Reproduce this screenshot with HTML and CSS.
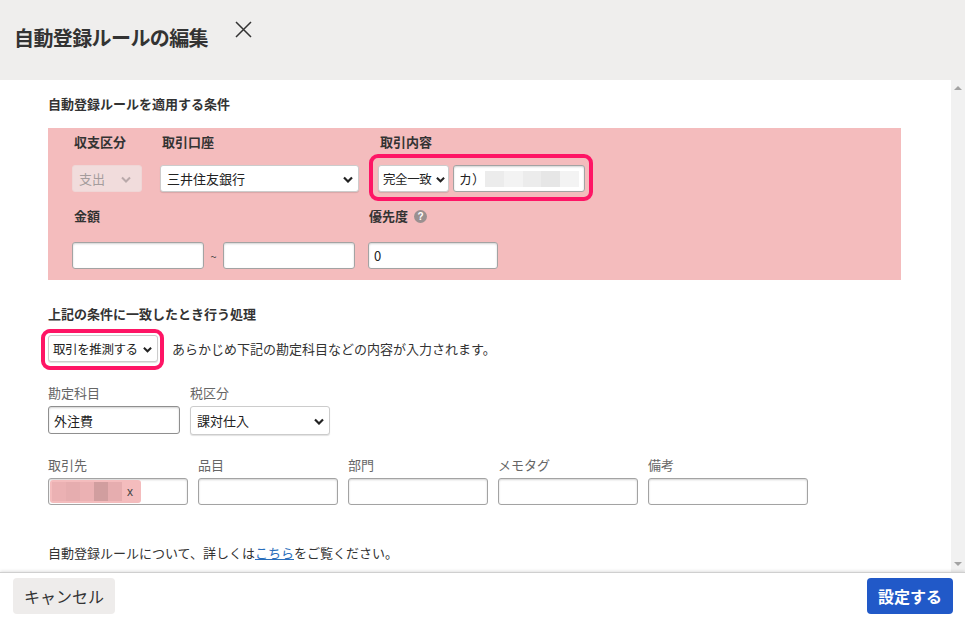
FILE: index.html
```html
<!DOCTYPE html>
<html lang="ja">
<head>
  <meta charset="UTF-8" />
  <meta name="viewport" content="width=device-width, initial-scale=1.0"/>
  <title>自動登録ルールの編集</title>
  <link rel="stylesheet" href="styles.css">
</head>
<body>
  <div class="modal">
    <header class="modal-header">
      <h1 class="modal-title">自動登録ルールの編集</h1>
      <span class="close-btn">
        <svg width="17" height="17" viewBox="0 0 17 17"><path d="M1 1L16 16M16 1L1 16" stroke="#333" stroke-width="1.5" fill="none"/></svg>
      </span>
    </header>

    <div class="modal-body">
      <div class="content">
        <h2 class="section-title">自動登録ルールを適用する条件</h2>

        <div class="condition-panel">
          <div class="panel-row">
            <div class="field field-kind">
              <div class="field-label">収支区分</div>
              <div class="select select-disabled select-kind">
                <span>支出</span>
                <svg class="chev" width="10" height="7" viewBox="0 0 10 7"><path d="M1 1.5L5 5.5L9 1.5" stroke="#b9a9aa" stroke-width="2" fill="none"/></svg>
              </div>
            </div>
            <div class="field field-account">
              <div class="field-label">取引口座</div>
              <div class="select select-account">
                <span>三井住友銀行</span>
                <svg class="chev" width="10" height="7" viewBox="0 0 10 7"><path d="M1 1.5L5 5.5L9 1.5" stroke="#222" stroke-width="2.2" fill="none"/></svg>
              </div>
            </div>
            <div class="field field-content">
              <div class="field-label">取引内容</div>
              <div class="match-group highlight">
                <div class="select select-match">
                  <span>完全一致</span>
                  <svg class="chev" width="9" height="7" viewBox="0 0 10 7"><path d="M1 1.5L5 5.5L9 1.5" stroke="#222" stroke-width="2.2" fill="none"/></svg>
                </div>
                <div class="text-input input-match">
                  <span>カ）</span>
                  <span class="blur-block b1"></span><span class="blur-block b2"></span><span class="blur-block b1"></span><span class="blur-block b3"></span><span class="blur-block b2"></span>
                </div>
              </div>
            </div>
          </div>

          <div class="panel-row row-second">
            <div class="field field-amount">
              <div class="field-label">金額</div>
              <div class="amount-range">
                <input class="text-input input-amount" type="text" value="">
                <span class="tilde">~</span>
                <input class="text-input input-amount" type="text" value="">
              </div>
            </div>
            <div class="field field-priority">
              <div class="field-label">優先度 <span class="help-icon">?</span></div>
              <input class="text-input input-priority" type="text" value="0">
            </div>
          </div>
        </div>

        <h2 class="section-title section-action">上記の条件に一致したとき行う処理</h2>
        <div class="action-row">
          <div class="highlight action-highlight">
            <div class="select select-action">
              <span>取引を推測する</span>
              <svg class="chev" width="9" height="7" viewBox="0 0 10 7"><path d="M1 1.5L5 5.5L9 1.5" stroke="#222" stroke-width="2.2" fill="none"/></svg>
            </div>
          </div>
          <span class="action-note">あらかじめ下記の勘定科目などの内容が入力されます。</span>
        </div>

        <div class="detail-row detail-row-first">
          <div class="detail-field">
            <div class="detail-label">勘定科目</div>
            <input class="text-input input-account-item" type="text" value="外注費">
          </div>
          <div class="detail-field">
            <div class="detail-label">税区分</div>
            <div class="select select-tax">
              <span>課対仕入</span>
              <svg class="chev" width="10" height="7" viewBox="0 0 10 7"><path d="M1 1.5L5 5.5L9 1.5" stroke="#222" stroke-width="2.2" fill="none"/></svg>
            </div>
          </div>
        </div>

        <div class="detail-row detail-row-second">
          <div class="detail-field">
            <div class="detail-label">取引先</div>
            <div class="text-input input-detail">
              <span class="chip">
                <span class="chip-block c1"></span><span class="chip-block c2"></span><span class="chip-block c1"></span><span class="chip-block c3"></span><span class="chip-block c2"></span>
                <span class="chip-x">x</span>
              </span>
            </div>
          </div>
          <div class="detail-field">
            <div class="detail-label">品目</div>
            <input class="text-input input-detail" type="text" value="">
          </div>
          <div class="detail-field">
            <div class="detail-label">部門</div>
            <input class="text-input input-detail" type="text" value="">
          </div>
          <div class="detail-field">
            <div class="detail-label">メモタグ</div>
            <input class="text-input input-detail" type="text" value="">
          </div>
          <div class="detail-field">
            <div class="detail-label">備考</div>
            <input class="text-input input-detail input-wide" type="text" value="">
          </div>
        </div>

        <p class="help-text">自動登録ルールについて、詳しくは<a href="#">こちら</a>をご覧ください。</p>
      </div>

      <div class="scrollbar">
        <span class="arrow-up"></span>
        <span class="arrow-down"></span>
      </div>
    </div>

    <footer class="modal-footer">
      <button class="btn btn-cancel">キャンセル</button>
      <button class="btn btn-submit">設定する</button>
    </footer>
  </div>
</body>
</html>
```

FILE: styles.css
```css
body {
  margin: 0;
  font-family: "Noto Sans CJK JP", "Noto Sans", sans-serif;
  font-size: 13px;
  color: #333;
  background: #fff;
  overflow: hidden;
}
input, button {
  font-family: inherit;
}
.modal {
  width: 965px;
  height: 617px;
  display: flex;
  flex-direction: column;
}
.modal-header {
  height: 80px;
  flex-shrink: 0;
  background-color: #efeeed;
  display: flex;
  align-items: flex-start;
  padding: 0 14px;
  box-sizing: border-box;
}
.modal-title {
  margin: 0;
  padding-top: 24px;
  font-size: 20px;
  line-height: 28px;
  letter-spacing: -0.6px;
  font-weight: bold;
  color: #333;
}
.close-btn {
  margin-left: 27px;
  margin-top: 21px;
  display: block;
  height: 17px;
}
.close-btn svg {
  display: block;
}
.modal-body {
  flex: 1;
  display: flex;
  min-height: 0;
}
.content {
  flex: 1;
  padding: 14px 50px 0 48px;
  overflow: hidden;
}
.section-title {
  margin: 0;
  font-size: 13px;
  line-height: 20px;
  font-weight: bold;
  color: #333;
}
.condition-panel {
  margin-top: 14px;
  background-color: #f4bcbd;
  padding: 5px 24px 11px 24px;
  height: 152px;
  box-sizing: border-box;
}
.panel-row {
  display: flex;
}
.row-second {
  margin-top: 15px;
}
.field-label {
  font-weight: bold;
  line-height: 18px;
  padding-left: 2px;
  display: flex;
  align-items: center;
}
.field-kind {
  width: 88px;
}
.field-account {
  width: 209px;
}
.field-content {
  padding-left: 9px;
}
.field-kind .select,
.field-account .select,
.match-group {
  margin-top: 14px;
}
.field-amount {
  width: 296px;
}
.field-priority .field-label {
  padding-left: 1px;
}
.amount-range {
  display: flex;
  align-items: center;
  margin-top: 17px;
}
.tilde {
  width: 19px;
  text-align: center;
  font-size: 11px;
  color: #444;
}
.field-priority .text-input {
  margin-top: 17px;
}
.help-icon {
  display: inline-block;
  width: 13px;
  height: 13px;
  border-radius: 50%;
  background-color: #9a9090;
  color: #fff;
  font-size: 10px;
  font-weight: bold;
  line-height: 13px;
  text-align: center;
  margin-left: 6px;
  font-family: "Liberation Sans", sans-serif;
}

/* selects */
.select {
  position: relative;
  height: 27px;
  box-sizing: border-box;
  border: 1px solid #ccc;
  border-radius: 3px;
  background-color: #fff;
  box-shadow: 0 1px 1px rgba(0, 0, 0, 0.12);
  display: flex;
  align-items: center;
  padding: 0 6px;
  color: #222;
}
.select .chev {
  position: absolute;
  right: 5px;
  top: 10px;
}
.select-kind {
  width: 70px;
}
.select-disabled {
  background-color: #f1dcdc;
  border-color: #efd6d6;
  box-shadow: none;
  color: #a49c9c;
}
.select-disabled .chev {
  right: 10px;
}
.select-account {
  width: 199px;
}
.select-match {
  width: 71px;
  padding-left: 4px;
  font-size: 12.5px;
  letter-spacing: -0.4px;
}
.select-match .chev {
  right: 3px;
}
.select-action {
  width: 110px;
  padding-left: 4px;
  font-size: 12.5px;
  letter-spacing: -0.4px;
}
.select-action .chev {
  right: 5px;
}
.select-tax {
  width: 140px;
  height: 29px;
  margin-top: 2px;
}
.select-tax .chev {
  right: 5px;
  top: 11px;
}

/* text inputs */
.text-input {
  height: 27px;
  box-sizing: border-box;
  border: 1px solid #a3a3a3;
  border-radius: 3px;
  background-color: #fff;
  box-shadow: inset 0 1px 2px rgba(0, 0, 0, 0.18);
  padding: 0 5px;
  font-size: 13px;
  color: #222;
  outline: none;
}
.input-amount {
  width: 132px;
}
.input-priority {
  width: 130px;
  display: block;
}
.match-group {
  display: flex;
  gap: 4px;
}
.input-match {
  width: 132px;
  display: flex;
  align-items: center;
  padding-left: 5px;
}
.blur-block {
  display: inline-block;
  height: 16px;
  width: 20px;
}
.b1 { background-color: #ececec; }
.b2 { background-color: #f3f3f3; }
.b3 { background-color: #e6e6e6; }

/* red highlight frame drawn over the controls */
.highlight {
  position: relative;
}
.highlight::after {
  content: "";
  position: absolute;
  top: -11px;
  left: -9px;
  right: -8px;
  bottom: -9px;
  border: 4px solid #fe1565;
  border-radius: 9px;
}

.section-action {
  margin-top: 24px;
}
.action-row {
  display: flex;
  align-items: center;
  margin-top: 11px;
}
.action-highlight::after {
  top: -6px;
  left: -7px;
  right: -6px;
  bottom: -8px;
}
.action-note {
  margin-left: 14px;
  color: #333;
}

.detail-row {
  display: flex;
  gap: 10px;
}
.detail-row-first {
  margin-top: 22px;
}
.detail-row-second {
  margin-top: 21px;
}
.detail-label {
  line-height: 18px;
  color: #666;
  margin-bottom: 4px;
}
.input-account-item {
  width: 132px;
  height: 28px;
  border-color: #8f8f8f;
  display: block;
}
.input-detail {
  width: 140px;
  display: block;
}
.input-wide {
  width: 160px;
}
div.input-detail {
  display: flex;
  align-items: center;
  padding: 0 1px;
}
.chip {
  display: flex;
  align-items: center;
  height: 23px;
  background-color: #f4bcbd;
  border-radius: 3px;
  padding: 0 3px 0 2px;
}
.chip-block {
  display: inline-block;
  height: 19px;
  width: 14px;
}
.c1 { background-color: #ebb1b3; }
.c2 { background-color: #e6adaf; }
.c3 { background-color: #d19e9f; }
.chip-x {
  margin-left: 5px;
  margin-right: 5px;
  font-family: "Liberation Sans", sans-serif;
  font-size: 12px;
  color: #444;
}

.help-text {
  margin: 38px 0 0 0;
  line-height: 20px;
  color: #333;
}
.help-text a {
  color: #2a6ebb;
  text-decoration: underline;
}

.scrollbar {
  width: 14px;
  background-color: #f1f1f1;
  display: flex;
  flex-direction: column;
  justify-content: space-between;
  align-items: center;
  padding: 6px 0;
  box-sizing: border-box;
}
.arrow-up {
  width: 0;
  height: 0;
  border-left: 4px solid transparent;
  border-right: 4px solid transparent;
  border-bottom: 4px solid #a3a3a3;
}
.arrow-down {
  width: 0;
  height: 0;
  border-left: 4px solid transparent;
  border-right: 4px solid transparent;
  border-top: 4px solid #a3a3a3;
}

.modal-footer {
  height: 45px;
  flex-shrink: 0;
  border-top: 1px solid #cfcfcf;
  box-shadow: 0 -1px 3px rgba(0, 0, 0, 0.12);
  display: flex;
  justify-content: space-between;
  align-items: flex-start;
  padding: 5px 12px 0 13px;
  box-sizing: border-box;
}
.btn {
  height: 36px;
  border: none;
  border-radius: 4px;
  font-size: 16px;
  cursor: pointer;
}
.btn-cancel {
  width: 102px;
  background-color: #eeeceb;
  color: #333;
}
.btn-submit {
  width: 86px;
  background-color: #2159c8;
  color: #fff;
  font-weight: bold;
}
```
